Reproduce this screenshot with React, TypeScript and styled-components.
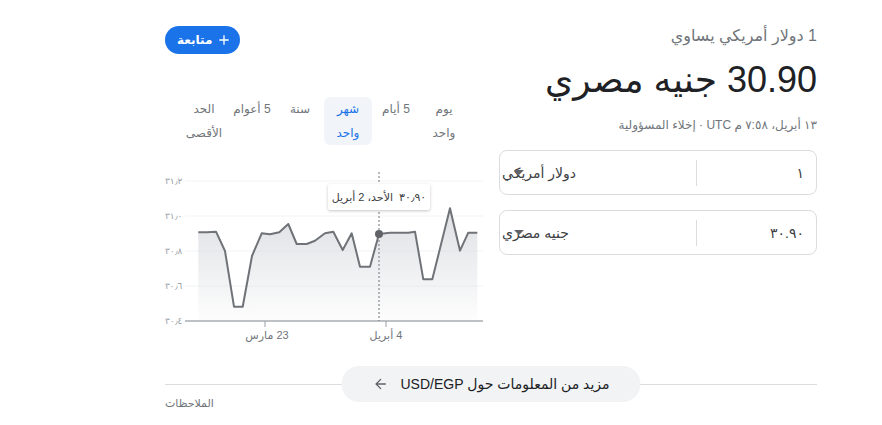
import React from "react";
import styled, { createGlobalStyle } from "styled-components";

const GlobalStyle = createGlobalStyle`
  html, body { margin: 0; padding: 0; background: #fff; }
  body { font-family: "Liberation Sans", Arial, "DejaVu Sans", sans-serif; color: #202124; }
  * { box-sizing: border-box; }
`;

const Page = styled.div`
  direction: rtl;
  width: 652px;
  margin-left: 165px;
  padding-top: 26px;
`;

const Columns = styled.div`
  display: grid;
  grid-template-columns: 318px 318px;
  column-gap: 16px;
`;

const InfoCol = styled.div`
  display: flex;
  flex-direction: column;
`;

const Subtitle = styled.div`
  font-size: 16px;
  line-height: 20px;
  color: #70757a;
`;

const BigValue = styled.div`
  font-size: 36px;
  line-height: 44px;
  margin-top: 12px;
  color: #202124;
`;

const Stamp = styled.div`
  font-size: 12px;
  line-height: 16px;
  color: #70757a;
  margin-top: 15px;
`;

const ConvBox = styled.div<{ $first?: boolean }>`
  position: relative;
  display: grid;
  grid-template-columns: 120px 1fr;
  height: 45px;
  border: 1px solid #dadce0;
  border-radius: 8px;
  margin-top: ${(p) => (p.$first ? "17px" : "15px")};
  align-items: center;
`;

const AmountCell = styled.div`
  padding: 0 12px;
  font-size: 14px;
  color: #3c4043;
  height: 26px;
  line-height: 26px;
  border-left: 1px solid #dadce0;
`;

const CurrencyCell = styled.div`
  font-size: 14px;
  color: #3c4043;
  text-align: left;
  padding-left: 2px;
  line-height: 26px;
`;

const Caret = styled.span`
  position: absolute;
  left: 14px;
  top: 19px;
  width: 0;
  height: 0;
  border-left: 5px solid transparent;
  border-right: 5px solid transparent;
  border-top: 5px solid #5f6368;
`;

const ChartCol = styled.div`
  display: flex;
  flex-direction: column;
`;

const FollowRow = styled.div`
  display: flex;
  justify-content: flex-end;
  height: 30px;
`;

const FollowButton = styled.button`
  direction: rtl;
  display: flex;
  align-items: center;
  gap: 4px;
  height: 28px;
  padding: 0 8px 0 12px;
  border: none;
  border-radius: 14px;
  background: #1a73e8;
  color: #fff;
  font-family: inherit;
  font-size: 12px;
  font-weight: bold;
`;

const Tabs = styled.div`
  display: flex;
  margin-top: 41px;
  padding-right: 15px;
`;

const Tab = styled.div<{ $active?: boolean }>`
  width: 48px;
  text-align: center;
  white-space: nowrap;
  font-size: 12px;
  line-height: 24px;
  color: ${(p) => (p.$active ? "#1a73e8" : "#70757a")};
  background: ${(p) => (p.$active ? "#f1f4f9" : "transparent")};
  border-radius: 6px;
`;

const ChartWrap = styled.div`
  position: relative;
  margin-top: 27px;
  height: 175px;
`;

const Tooltip = styled.div`
  position: absolute;
  left: 163px;
  top: 12px;
  width: 102px;
  height: 26px;
  background: #fff;
  box-shadow: 0 1px 3px rgba(60, 64, 67, 0.3);
  border-radius: 2px;
  font-size: 11px;
  line-height: 26px;
  text-align: center;
  color: #3c4043;
  white-space: nowrap;
`;

const Footer = styled.div`
  position: relative;
  margin-top: 37px;
  border-top: 1px solid #dadce0;
  padding-top: 11px;
`;

const MoreButton = styled.div`
  position: absolute;
  top: -19px;
  left: 50%;
  transform: translateX(-50%);
  display: flex;
  align-items: center;
  justify-content: center;
  gap: 12px;
  width: 299px;
  height: 36px;
  border-radius: 18px;
  background: #f1f3f4;
  font-size: 14px;
  color: #202124;
`;

const Notes = styled.div`
  font-size: 11px;
  line-height: 14px;
  color: #70757a;
  text-align: left;
`;

const pts: [number, number][] = [
  [33.3, 60.3], [41.7, 60.3], [51, 59.7], [60, 79], [69, 134.7], [77.7, 134.7],
  [87, 84], [96.7, 61.3], [105, 62.3], [114.3, 60.3], [123.3, 52], [131.7, 72],
  [141.7, 72], [150, 68.7], [160, 61.3], [168.3, 59.7], [177.7, 78], [186.7, 61.3],
  [195, 94.7], [205, 94.7], [214, 62], [225, 60.7], [243.3, 60.7], [250, 59.7],
  [258.3, 107.3], [267.3, 107.3], [285, 36.3], [295, 78.7], [303.3, 60.7], [312.3, 60.7],
];

const linePath = pts.map((p, i) => `${i ? "L" : "M"}${p[0]} ${p[1]}`).join(" ");
const areaPath = `${linePath} L312.3 149 L33.3 149 Z`;

const yLabels = [
  { y: 9, t: "٣١٫٢" },
  { y: 44, t: "٣١٫٠" },
  { y: 79, t: "٣٠٫٨" },
  { y: 114, t: "٣٠٫٦" },
  { y: 149, t: "٣٠٫٤" },
];

function Chart() {
  return (
    <svg width="318" height="175" viewBox="0 0 318 175" style={{ display: "block" }}>
      <defs>
        <linearGradient id="fill" x1="0" y1="0" x2="0" y2="1">
          <stop offset="0%" stopColor="#dadce0" stopOpacity="0.9" />
          <stop offset="100%" stopColor="#dadce0" stopOpacity="0.05" />
        </linearGradient>
      </defs>
      {yLabels.slice(0, 4).map((l) => (
        <line key={l.y} x1="20" x2="318" y1={l.y} y2={l.y} stroke="#f1f3f4" strokeWidth="1" />
      ))}
      <path d={areaPath} fill="url(#fill)" />
      <line x1="20" x2="318" y1="149" y2="149" stroke="#bdc1c6" strokeWidth="2" />
      {yLabels.map((l) => (
        <text key={l.t} x="0" y={l.y + 3} fontSize="9" fill="#9aa0a6" direction="ltr" textAnchor="start"
          fontFamily="'DejaVu Sans', sans-serif">{l.t}</text>
      ))}
      <line x1="100" x2="100" y1="149" y2="155" stroke="#9aa0a6" strokeWidth="1" />
      <line x1="221" x2="221" y1="149" y2="155" stroke="#9aa0a6" strokeWidth="1" />
      <text x="102" y="167" fontSize="11" fill="#70757a" textAnchor="middle" direction="rtl">23 مارس</text>
      <text x="221" y="167" fontSize="11" fill="#70757a" textAnchor="middle" direction="rtl">4 أبريل</text>
      <line x1="214" x2="214" y1="0" y2="149" stroke="#70757a" strokeWidth="1" strokeDasharray="2 2" />
      <path d={linePath} fill="none" stroke="#6f7378" strokeWidth="2" strokeLinejoin="round" />
      <circle cx="214" cy="62" r="4" fill="#5f6368" />
    </svg>
  );
}

const tabs: string[][] = [
  ["يوم", "واحد"],
  ["5 أيام"],
  ["شهر", "واحد"],
  ["سنة"],
  ["5 أعوام"],
  ["الحد", "الأقصى"],
];

export default function App() {
  return (
    <>
      <GlobalStyle />
      <Page>
        <Columns>
          <InfoCol>
            <Subtitle>1 دولار أمريكي يساوي</Subtitle>
            <BigValue>30.90 جنيه مصري</BigValue>
            <Stamp>١٣ أبريل، ٧:٥٨ م UTC · إخلاء المسؤولية</Stamp>
            <ConvBox $first>
              <AmountCell>١</AmountCell>
              <CurrencyCell>دولار أمريكي</CurrencyCell>
              <Caret />
            </ConvBox>
            <ConvBox>
              <AmountCell>٣٠.٩٠</AmountCell>
              <CurrencyCell>جنيه مصري</CurrencyCell>
              <Caret />
            </ConvBox>
          </InfoCol>
          <ChartCol>
            <FollowRow>
              <FollowButton>
                <svg width="16" height="16" viewBox="0 0 24 24">
                  <path d="M19 13h-6v6h-2v-6H5v-2h6V5h2v6h6v2z" fill="#fff" />
                </svg>
                <span>متابعة</span>
              </FollowButton>
            </FollowRow>
            <Tabs>
              {tabs.map((t, i) => (
                <Tab key={t.join(" ")} $active={i === 2}>
                  {t.map((line, j) => (
                    <React.Fragment key={line}>
                      {j > 0 && <br />}
                      {line}
                    </React.Fragment>
                  ))}
                </Tab>
              ))}
            </Tabs>
            <ChartWrap>
              <Chart />
              <Tooltip>٣٠٫٩٠&nbsp;&nbsp;الأحد، 2 أبريل</Tooltip>
            </ChartWrap>
          </ChartCol>
        </Columns>
        <Footer>
          <MoreButton>
            <span>مزيد من المعلومات حول USD/EGP</span>
            <svg width="16" height="16" viewBox="0 0 24 24">
              <path d="M20 11H7.83l5.59-5.59L12 4l-8 8 8 8 1.41-1.41L7.83 13H20v-2z" fill="#5f6368" />
            </svg>
          </MoreButton>
          <Notes>الملاحظات</Notes>
        </Footer>
      </Page>
    </>
  );
}
